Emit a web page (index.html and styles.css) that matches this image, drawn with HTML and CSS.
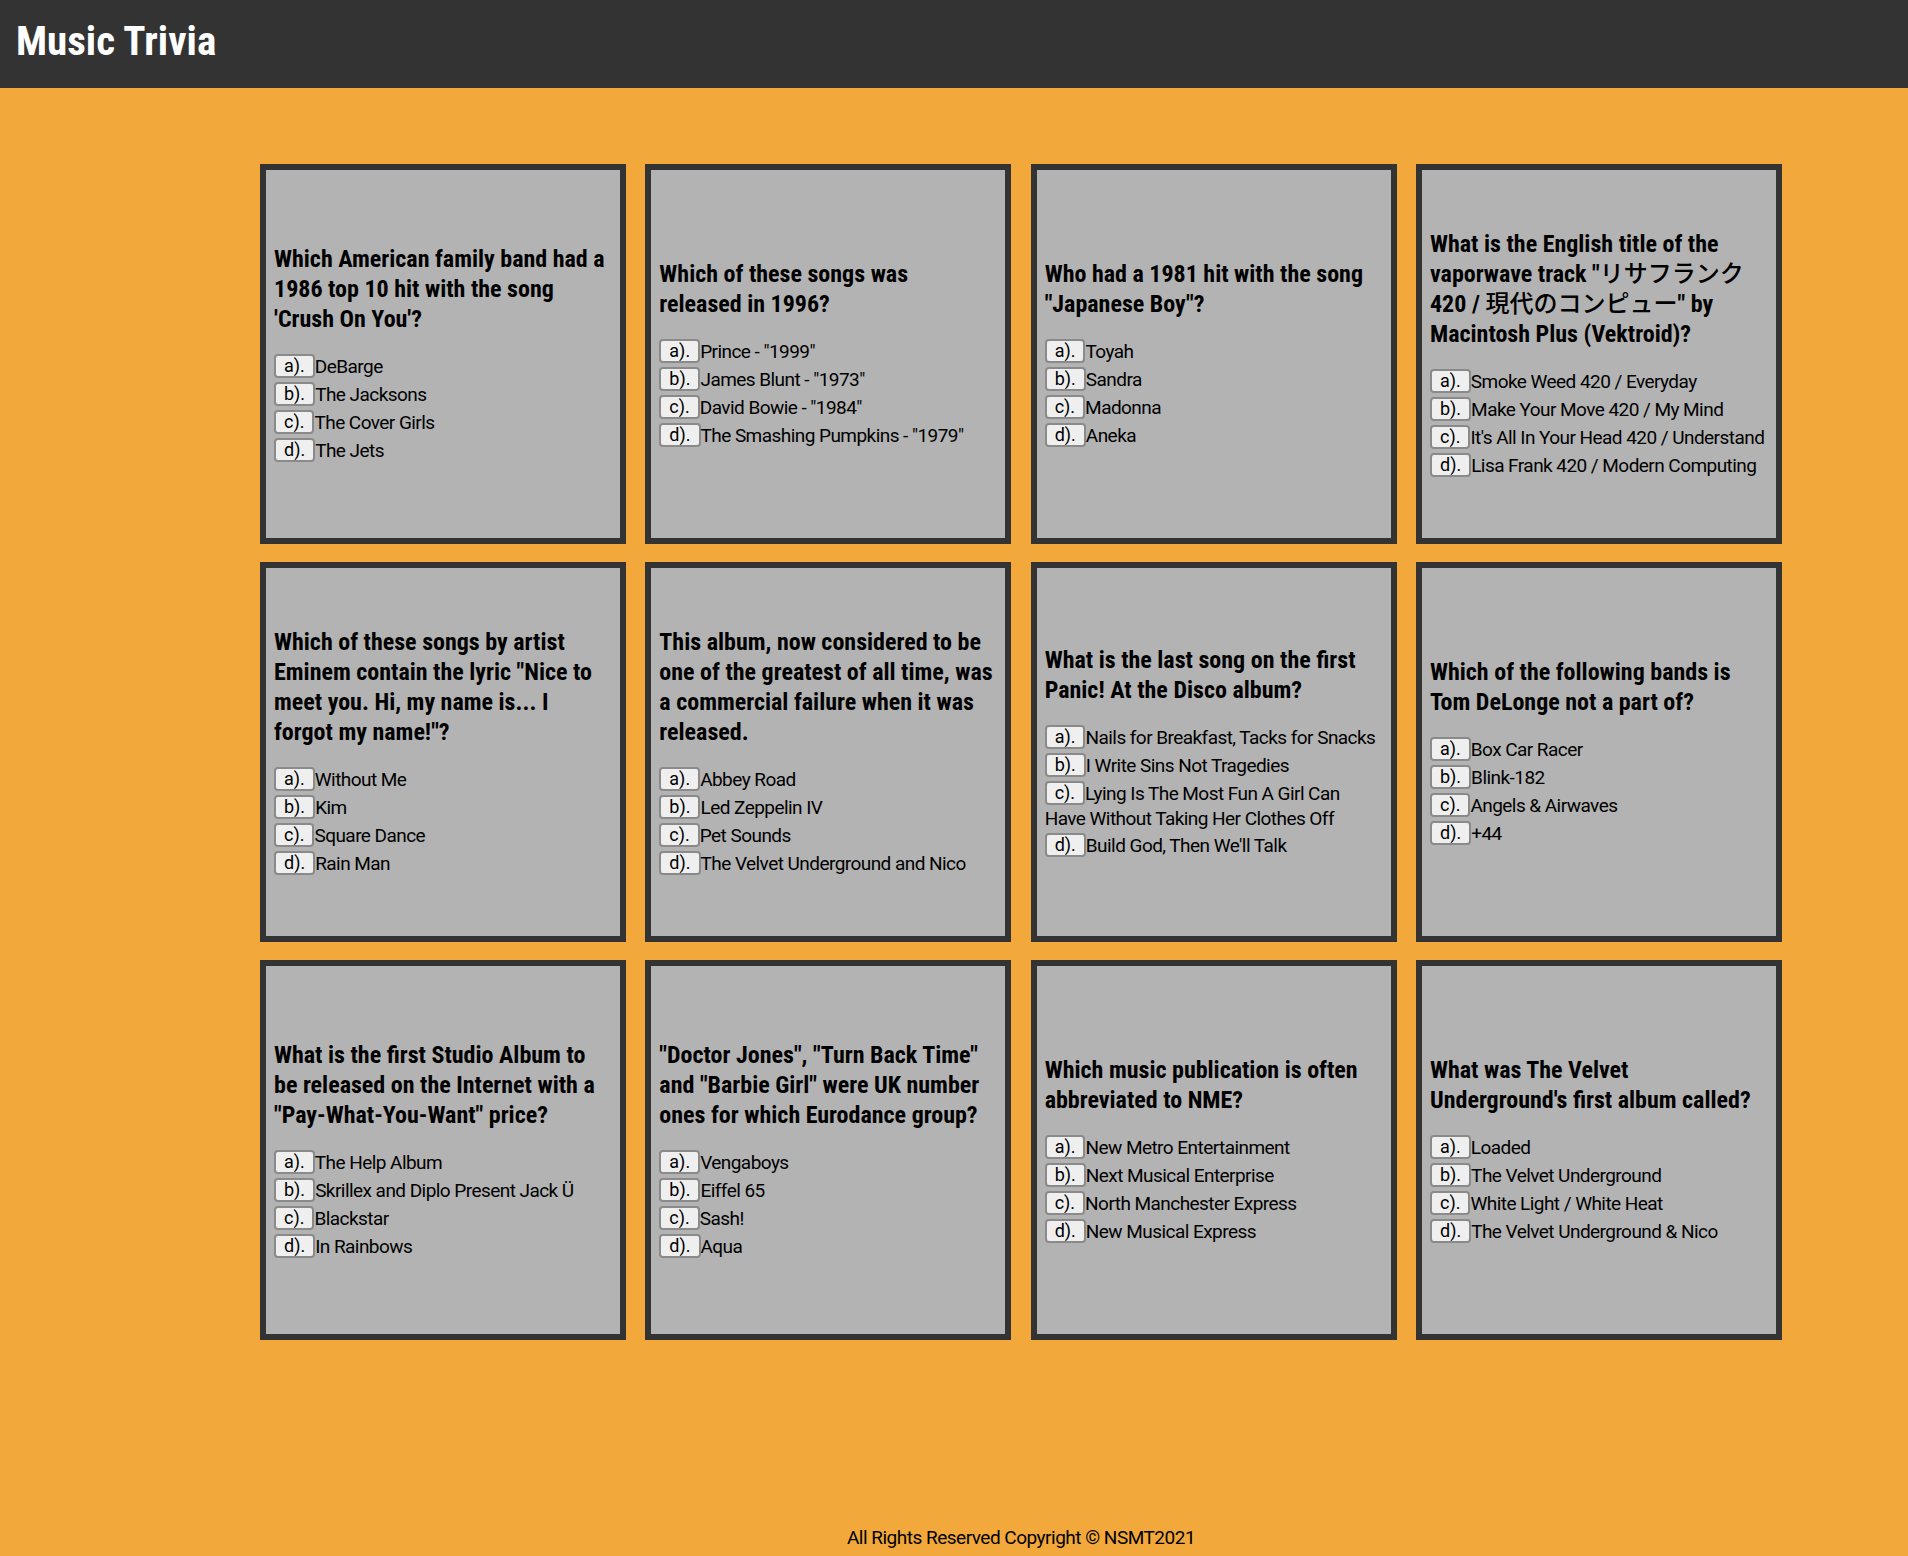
FILE: index.html
```html
<!DOCTYPE html>
<html lang="en">
<head>
<meta charset="utf-8">
<title>Music Trivia</title>
<link rel="stylesheet" href="styles.css">
</head>
<body>
<header class="topbar">
  <h1 class="title">Music Trivia</h1>
</header>
<main class="main">
  <section class="grid">
    <div class="card">
      <h3 class="question">Which American family band had a 1986 top 10 hit with the song 'Crush On You'?</h3>
      <div class="option"><button class="opt-btn">a).</button>DeBarge</div>
      <div class="option"><button class="opt-btn">b).</button>The Jacksons</div>
      <div class="option"><button class="opt-btn">c).</button>The Cover Girls</div>
      <div class="option"><button class="opt-btn">d).</button>The Jets</div>
    </div>
    <div class="card">
      <h3 class="question">Which of these songs was released in 1996?</h3>
      <div class="option"><button class="opt-btn">a).</button>Prince - "1999"</div>
      <div class="option"><button class="opt-btn">b).</button>James Blunt - "1973"</div>
      <div class="option"><button class="opt-btn">c).</button>David Bowie - "1984"</div>
      <div class="option"><button class="opt-btn">d).</button>The Smashing Pumpkins - "1979"</div>
    </div>
    <div class="card">
      <h3 class="question">Who had a 1981 hit with the song "Japanese Boy"?</h3>
      <div class="option"><button class="opt-btn">a).</button>Toyah</div>
      <div class="option"><button class="opt-btn">b).</button>Sandra</div>
      <div class="option"><button class="opt-btn">c).</button>Madonna</div>
      <div class="option"><button class="opt-btn">d).</button>Aneka</div>
    </div>
    <div class="card">
      <h3 class="question">What is the English title of the vaporwave track "<span class="jp">リサフランク</span>420 / <span class="jp">現代のコンピュー</span>" by Macintosh Plus (Vektroid)?</h3>
      <div class="option"><button class="opt-btn">a).</button>Smoke Weed 420 / Everyday</div>
      <div class="option"><button class="opt-btn">b).</button>Make Your Move 420 / My Mind</div>
      <div class="option"><button class="opt-btn">c).</button>It's All In Your Head 420 / Understand</div>
      <div class="option"><button class="opt-btn">d).</button>Lisa Frank 420 / Modern Computing</div>
    </div>
    <div class="card">
      <h3 class="question">Which of these songs by artist Eminem contain the lyric "Nice to meet you. Hi, my name is... I forgot my name!"?</h3>
      <div class="option"><button class="opt-btn">a).</button>Without Me</div>
      <div class="option"><button class="opt-btn">b).</button>Kim</div>
      <div class="option"><button class="opt-btn">c).</button>Square Dance</div>
      <div class="option"><button class="opt-btn">d).</button>Rain Man</div>
    </div>
    <div class="card">
      <h3 class="question">This album, now considered to be one of the greatest of all time, was a commercial failure when it was released.</h3>
      <div class="option"><button class="opt-btn">a).</button>Abbey Road</div>
      <div class="option"><button class="opt-btn">b).</button>Led Zeppelin IV</div>
      <div class="option"><button class="opt-btn">c).</button>Pet Sounds</div>
      <div class="option"><button class="opt-btn">d).</button>The Velvet Underground and Nico</div>
    </div>
    <div class="card">
      <h3 class="question">What is the last song on the first Panic! At the Disco album?</h3>
      <div class="option"><button class="opt-btn">a).</button>Nails for Breakfast, Tacks for Snacks</div>
      <div class="option"><button class="opt-btn">b).</button>I Write Sins Not Tragedies</div>
      <div class="option"><button class="opt-btn">c).</button>Lying Is The Most Fun A Girl Can Have Without Taking Her Clothes Off</div>
      <div class="option"><button class="opt-btn">d).</button>Build God, Then We'll Talk</div>
    </div>
    <div class="card">
      <h3 class="question">Which of the following bands is Tom DeLonge not a part of?</h3>
      <div class="option"><button class="opt-btn">a).</button>Box Car Racer</div>
      <div class="option"><button class="opt-btn">b).</button>Blink-182</div>
      <div class="option"><button class="opt-btn">c).</button>Angels &amp; Airwaves</div>
      <div class="option"><button class="opt-btn">d).</button>+44</div>
    </div>
    <div class="card">
      <h3 class="question">What is the first Studio Album to be released on the Internet with a "Pay-What-You-Want" price?</h3>
      <div class="option"><button class="opt-btn">a).</button>The Help Album</div>
      <div class="option"><button class="opt-btn">b).</button>Skrillex and Diplo Present Jack Ü</div>
      <div class="option"><button class="opt-btn">c).</button>Blackstar</div>
      <div class="option"><button class="opt-btn">d).</button>In Rainbows</div>
    </div>
    <div class="card">
      <h3 class="question">"Doctor Jones", "Turn Back Time" and "Barbie Girl" were UK number ones for which Eurodance group?</h3>
      <div class="option"><button class="opt-btn">a).</button>Vengaboys</div>
      <div class="option"><button class="opt-btn">b).</button>Eiffel 65</div>
      <div class="option"><button class="opt-btn">c).</button>Sash!</div>
      <div class="option"><button class="opt-btn">d).</button>Aqua</div>
    </div>
    <div class="card">
      <h3 class="question">Which music publication is often abbreviated to NME?</h3>
      <div class="option"><button class="opt-btn">a).</button>New Metro Entertainment</div>
      <div class="option"><button class="opt-btn">b).</button>Next Musical Enterprise</div>
      <div class="option"><button class="opt-btn">c).</button>North Manchester Express</div>
      <div class="option"><button class="opt-btn">d).</button>New Musical Express</div>
    </div>
    <div class="card">
      <h3 class="question">What was The Velvet Underground's first album called?</h3>
      <div class="option"><button class="opt-btn">a).</button>Loaded</div>
      <div class="option"><button class="opt-btn">b).</button>The Velvet Underground</div>
      <div class="option"><button class="opt-btn">c).</button>White Light / White Heat</div>
      <div class="option"><button class="opt-btn">d).</button>The Velvet Underground &amp; Nico</div>
    </div>
  </section>
  <footer class="footer">All Rights Reserved Copyright © NSMT2021</footer>
</main>
</body>
</html>
```

FILE: styles.css
```css
html, body {
  margin: 0;
  padding: 0;
}
body {
  background: #f2a83b;
  font-family: Roboto, "Noto Sans CJK JP", sans-serif;
  color: #000;
}
.topbar {
  background: #333333;
  height: 88px;
  display: flex;
  align-items: center;
  padding: 0 16px;
}
.title {
  margin: 0 0 6px 0;
  color: #ffffff;
  font-size: 41px;
  font-weight: bold;
  font-stretch: 75%;
  line-height: 1;
}
.main {
  padding-left: 134px;
  display: flex;
  flex-direction: column;
  align-items: center;
}
.grid {
  margin-top: 76px;
  display: grid;
  grid-template-columns: repeat(4, 366px);
  grid-auto-rows: 380px;
  column-gap: 19.33px;
  row-gap: 18px;
}
.card {
  box-sizing: border-box;
  border: 6px solid #333333;
  background: #b3b3b3;
  padding: 0 2px 0 8px;
  display: flex;
  flex-direction: column;
  justify-content: center;
}
.question {
  margin: 0 9px 18px 0;
  font-size: 24px;
  line-height: 30px;
  font-weight: bold;
  font-stretch: 75%;
  color: #000;
}
.jp {
  font-weight: 500;
}
.option {
  margin-right: 6px;
  font-size: 19px;
  letter-spacing: -0.55px;
  line-height: 24px;
  color: #000;
}
.opt-btn {
  font-family: inherit;
  font-size: 18px;
  letter-spacing: 0;
  line-height: 20px;
  color: #000;
  background: #efefef;
  border: 2px solid #8a8a8a;
  border-radius: 4px;
  padding: 0 8px;
  margin: 2px 0;
  vertical-align: 1px;
}
.footer {
  margin-top: 186px;
  font-size: 19px;
  letter-spacing: -0.5px;
  line-height: 24px;
  text-align: center;
}
```
